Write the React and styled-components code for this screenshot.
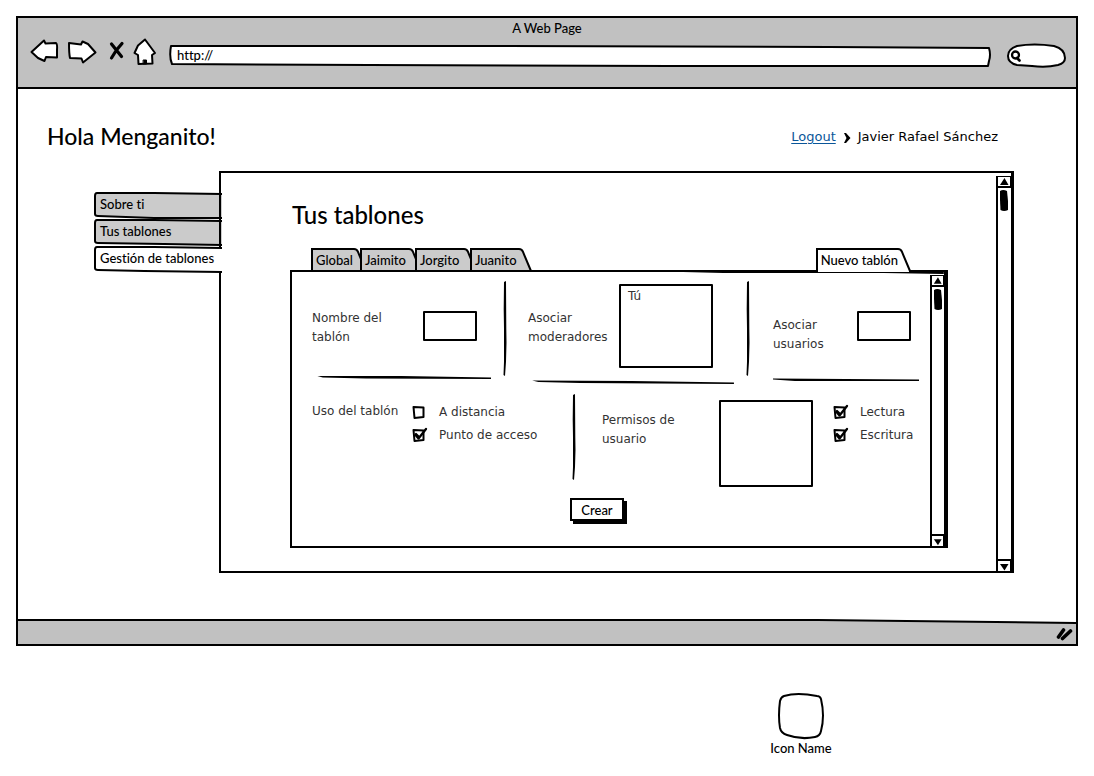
import React from "react";
import styled, { createGlobalStyle, css } from "styled-components";

const ink = "#000";
const chrome = "#c1c1c1";
const tabGrey = "#cbcbcb";
const uiFont = `Lato, "Open Sans", sans-serif`;
const textFont = `"DejaVu Sans", "Noto Sans", sans-serif`;

const GlobalStyle = createGlobalStyle`
  *, *::before, *::after { box-sizing: border-box; }
  body {
    margin: 0;
    background: #fff;
    color: ${ink};
    font: 500 13px/20px ${uiFont};
    font-variant-ligatures: none;
  }
  button, input, textarea { font: inherit; font-variant-ligatures: none; color: inherit; margin: 0; }
  h1, h2, p, figure { margin: 0; font-weight: 500; }
  svg { display: block; flex: none; }
`;

const Page = styled.div`
  padding: 16px 16px 8px;
`;

const BrowserWindow = styled.div`
  border: 2px solid ${ink};
`;

const Chrome = styled.header`
  background: ${chrome};
  border-bottom: 2px solid ${ink};
  padding-bottom: 17px;
`;

const WindowTitle = styled.p`
  text-align: center;
`;

const Toolbar = styled.div`
  display: flex;
  align-items: flex-start;
  height: 32px;
  padding: 0 10px 0 12px;
`;

const IconButton = styled.button`
  border: 0;
  padding: 0;
  background: none;
  margin-right: ${(p) => p.$gap || 0}px;
`;

const Backdrop = styled.svg`
  position: absolute;
  inset: 0;
  width: 100%;
  height: 100%;
  overflow: visible;
  pointer-events: none;
`;

const AddressBox = styled.label`
  position: relative;
  flex: 1;
  height: 22px;
  margin: 7px 15px 0 0;
`;

const SearchBox = styled(AddressBox)`
  flex: none;
  width: 60px;
  height: 24px;
  margin: 5px 0 0;
`;

const BareInput = styled.input`
  position: relative;
  display: block;
  width: 100%;
  height: 100%;
  border: 0;
  outline: 0;
  background: transparent;
  padding: 0 8px 2px;
  ${(p) => p.$search && css`padding-left: 18px;`}
`;

const TopRow = styled.div`
  display: flex;
  justify-content: space-between;
  align-items: center;
  height: 82px;
  padding: 12px 78px 0 29px;
`;

const Heading = styled.h1`
  font-size: ${(p) => p.$size}px;
  line-height: 30px;
`;

const Breadcrumb = styled.nav`
  display: flex;
  align-items: center;
  gap: 7px;
  padding-top: 2px;
  font: 13px/20px ${textFont};
`;

const Link = styled.a`
  color: #0a5699;
  text-decoration: underline;
  text-underline-offset: 2px;
`;

const Workspace = styled.div`
  display: flex;
  align-items: flex-start;
  padding: 0 62px 46px 76px;
`;

const SideTabs = styled.nav`
  position: relative;
  z-index: 1;
  display: flex;
  flex-direction: column;
  gap: 1px;
  width: 128px;
  margin: 21px -3px 0 0;
`;

const SideTab = styled.button`
  position: relative;
  height: 26px;
  padding: 0 0 2px 6px;
  border: 0;
  background: none;
  text-align: left;
  white-space: nowrap;
  & > span { position: relative; }
`;

const Panel = styled.main`
  display: flex;
  flex: 1;
  min-width: 0;
  border: 2px solid ${ink};
  border-right-width: 3px;
`;

const PanelBody = styled.div`
  flex: 1;
  min-width: 0;
  padding: 27px 48px 23px 69px;
`;

const PanelHeading = styled(Heading)`
  padding-left: 2px;
`;

const TabRow = styled.div`
  position: relative;
  z-index: 1;
  display: flex;
  margin: 18px 37px -2px 21px;
`;

const Tab = styled.button`
  display: flex;
  height: 24px;
  padding: 0;
  border: 0;
  background: none;
  margin-right: -7px;
  ${(p) => p.$end && css`margin: 0 0 0 auto;`}
`;

const TabLabel = styled.span`
  min-width: ${(p) => p.$width}px;
  height: ${(p) => (p.$open ? 24 : 22)}px;
  padding-left: 3px;
  border: solid ${ink};
  border-width: 2px 0 0 2px;
  background: ${(p) => (p.$open ? "#fff" : tabGrey)};
  text-align: left;
  white-space: nowrap;
`;

const FormPanel = styled.section`
  position: relative;
  display: flex;
  border: 2px solid ${ink};
  border-right-width: 4px;
`;

const TopStroke = styled.svg`
  position: absolute;
  top: -2px;
  right: 0;
  width: 40%;
  height: 4px;
`;

const Form = styled.form`
  flex: 1;
  min-width: 0;
  color: #333;
  font: 12px/19px ${textFont};
`;

const TopGrid = styled.div`
  display: grid;
  grid-template-columns: 205fr 16px 227fr 16px 174fr;
`;

const BottomGrid = styled.div`
  display: grid;
  grid-template-columns: 274fr 16px 348fr;
`;

const Cell = styled.div`
  display: flex;
  flex-direction: column;
  gap: 6px;
  padding: 12px ${(p) => p.$right}px 0 ${(p) => p.$left}px;
`;

const FieldRow = styled.div`
  display: flex;
  align-items: center;
  justify-content: space-between;
  height: 84px;
  padding-right: ${(p) => p.$inset}px;
`;

const FieldLabel = styled.label`
  padding-top: ${(p) => (p.$low ? 18 : 4)}px;
`;

const boxed = css`
  flex: none;
  border: 2px solid ${ink};
  border-radius: 1px;
  background: #fff;
  outline: 0;
`;

const TextBox = styled.input`
  ${boxed}
  width: 54px;
  height: 30px;
  padding: 0 4px;
`;

const TextArea = styled.textarea`
  ${boxed}
  width: 94px;
  height: ${(p) => p.$height}px;
  padding: 1px 7px;
  resize: none;
  overflow: hidden;
`;

const Group = styled.div`
  display: flex;
  align-items: flex-start;
  padding: 14px 0 0 20px;
`;

const GroupLabel = styled.label`
  width: ${(p) => p.$width}px;
  padding-top: ${(p) => p.$top}px;
`;

const Checks = styled.div`
  display: flex;
  flex-direction: column;
  gap: 4px;
  padding: 3px 0 0 ${(p) => p.$gap || 0}px;
`;

const CheckLabel = styled.label`
  display: flex;
  align-items: center;
  gap: 10px;
`;

const CheckBoxWrap = styled.span`
  position: relative;
  width: 17px;
  height: 17px;
  & input {
    appearance: none;
    position: absolute;
    inset: 0;
    width: 17px;
    height: 17px;
  }
  & svg { position: relative; pointer-events: none; }
  & .tick { display: none; }
  & input:checked + svg .tick { display: inline; }
`;

const Actions = styled.div`
  display: flex;
  padding: 11px 0 25px 278px;
`;

const SubmitButton = styled.button`
  width: 54px;
  height: 23px;
  padding: 0;
  border: 2px solid ${ink};
  background: #fff;
  color: ${ink};
  box-shadow: 3px 3px 0 ${ink};
  font: 500 13px/18px ${uiFont};
`;

const ScrollTrack = styled.div`
  display: flex;
  flex-direction: column;
  justify-content: space-between;
  width: ${(p) => p.$width}px;
  margin-top: 3px;
  border-left: 2px solid ${ink};
`;

const ScrollButton = styled.button`
  display: block;
  width: 100%;
  height: 12px;
  padding: 0;
  border: solid ${ink};
  border-width: 2px 1px 0 0;
  background: #fff;
  ${(p) => p.$up && css`border-width: 1px 1px 2px 0;`}
`;

const Status = styled.footer`
  position: relative;
  display: flex;
  justify-content: flex-end;
  height: 25px;
  padding: 6px 2px 0 0;
`;

const StatusGrip = styled.svg`
  position: relative;
`;

const IconFigure = styled.figure`
  display: flex;
  flex-direction: column;
  align-items: center;
  width: 62px;
  margin: 46px 246px 0 auto;
  line-height: 16px;
  white-space: nowrap;
`;

const stroke = {
  stroke: ink,
  strokeWidth: 2,
  strokeLinecap: "round",
  strokeLinejoin: "round",
  fill: "#fff",
};

function ToolIcon({ label, box, gap, children }) {
  const [x, w] = box;
  return (
    <IconButton type="button" aria-label={label} $gap={gap}>
      <svg width={w} height="32" viewBox={`${x} 38 ${w} 32`} {...stroke}>
        {children}
      </svg>
    </IconButton>
  );
}

const sideShapes = [
  "M128 2 L60 1 L3 1 Q1 1 1 4 L1 22 Q1 24 4 24 L60 26 L128 26",
  "M128 2 L60 1 L3 1 Q1 1 1 4 L1 22 Q1 24 4 24 L70 25 L128 26",
  "M128 2 L60 1 L3 1 Q1 1 1 4 L1 22 Q1 24 4 24 L50 25 L128 26",
];

function SideItem({ index, active, children }) {
  return (
    <SideTab type="button" aria-current={active ? "page" : undefined}>
      <Backdrop viewBox="0 0 128 26" preserveAspectRatio="none" aria-hidden="true">
        <path d={sideShapes[index]} {...stroke} strokeLinecap="butt" fill={active ? "#fff" : tabGrey} />
        {!active && <path d="M126 2 L126 26" stroke={ink} strokeWidth="2" />}
      </Backdrop>
      <span>{children}</span>
    </SideTab>
  );
}

function TopTab({ width, open, end, children }) {
  return (
    <Tab type="button" role="tab" aria-selected={!!open} $end={end}>
      <TabLabel $width={width} $open={open}>{children}</TabLabel>
      <svg width="13" height="24" viewBox="0 0 13 24" aria-hidden="true">
        <path d={`M0 1 Q3 1 4 4 L11 22 ${open ? "L11 24 L0 24" : "L0 22"} Z`} fill={open ? "#fff" : tabGrey} />
        <path d="M0 1 Q3 1 4 4 L12 23" fill="none" stroke={ink} strokeWidth="2" />
      </svg>
    </Tab>
  );
}

function Scrollbar({ width }) {
  return (
    <ScrollTrack $width={width}>
      <div>
        <ScrollButton type="button" aria-label="Subir" $up>
          <svg width="100%" height="9" viewBox="0 0 12 9"><path d="M6.500 1 L10.500 8 L2 8 Z" fill={ink} /></svg>
        </ScrollButton>
        <svg width="12" height="24" viewBox="0 0 12 24" aria-hidden="true">
          <path d="M2 3 Q5 1 9 3 L10 13 L10 22 Q6 24 2.500 22 L2 12 Z" fill={ink} />
        </svg>
      </div>
      <ScrollButton type="button" aria-label="Bajar">
        <svg width="100%" height="9" viewBox="0 0 12 9"><path d="M2 2 L10.500 2 L6.500 8.500 Z" fill={ink} /></svg>
      </ScrollButton>
    </ScrollTrack>
  );
}

function Rule({ d }) {
  return (
    <svg width="100%" height="12" viewBox="0 0 200 12" preserveAspectRatio="none" aria-hidden="true">
      <path d={d} fill={ink} />
    </svg>
  );
}

function Divider({ top, length }) {
  const l = length;
  return (
    <svg width="16" height={top + l} viewBox={`0 ${-top} 16 ${top + l}`} aria-hidden="true">
      <path
        d={`M7 1 L9 0 L9.300 ${l * 0.5} L9.500 ${l * 0.65} L9 ${l * 0.85} L8 ${l} L6.500 ${l - 1} L7 ${l * 0.85} L7 ${l * 0.5} L6.700 ${l * 0.3} Z`}
        fill={ink}
      />
    </svg>
  );
}

function Check({ checked, children }) {
  return (
    <CheckLabel>
      <CheckBoxWrap>
        <input type="checkbox" defaultChecked={checked} />
        <svg width="17" height="17" viewBox="0 0 17 17" {...stroke}>
          <path d="M1.500 3 L11.500 3.500 L11.500 13 L2.500 14 Z" />
          <path className="tick" d="M3.500 8 L6.500 11.500 L14 2 M4 7 L7 10" fill="none" strokeWidth="2.300" />
        </svg>
      </CheckBoxWrap>
      {children}
    </CheckLabel>
  );
}

export default function App() {
  return (
    <Page>
      <GlobalStyle />
      <BrowserWindow>
        <Chrome>
          <WindowTitle>A Web Page</WindowTitle>
          <Toolbar>
            <ToolIcon label="Atrás" box={[30, 30]} gap={7}>
              <path d="M31.500 52 L44 40.500 L45.500 43.500 L56 43 Q57.500 44 57 50 L57 57.500 L46 57 L44.500 61 L38 58 Z" />
            </ToolIcon>
            <ToolIcon label="Adelante" box={[67, 30]} gap={11}>
              <path d="M69 43 L81 44.500 L82.500 41.500 L88 44 L95.500 52.500 L83 62.500 L81.500 58.500 L70 58 Q69 54 69 43 Z" />
            </ToolIcon>
            <ToolIcon label="Detener" box={[108, 17]} gap={8}>
              <path d="M111.500 44 L121.500 56.500 M122 43.500 L116.500 50 L111.500 58" fill="none" strokeWidth="3.200" />
            </ToolIcon>
            <ToolIcon label="Inicio" box={[133, 24]} gap={12}>
              <path d="M145 39.500 L155 53 L152 55 L152.500 63.500 L138.500 64 L138 55 L134.500 53 L138 45.500 Z" />
              <path d="M143.500 60 L146.500 60 L146.500 64 L143.500 64 Z" fill={ink} strokeWidth="1" />
            </ToolIcon>
            <AddressBox>
              <Backdrop viewBox="0 0 822 22" preserveAspectRatio="none" aria-hidden="true">
                <path d="M2 1 L300 1 L660 2 L820 3 Q822 10 820 16 L819 21 L500 21 L200 20 L3 19 Q0 12 2 1 Z" {...stroke} />
              </Backdrop>
              <BareInput aria-label="Dirección" defaultValue="http://" />
            </AddressBox>
            <SearchBox>
              <Backdrop viewBox="0 0 60 24" aria-hidden="true">
                <path d="M2 13 Q2 6 11 3 Q28 0 48 3 Q59 6 59 15 Q59 20 52 22 Q40 25 26 23 L11 22 Q2 20 2 13 Z" {...stroke} />
                <circle cx="9.500" cy="12" r="3.500" {...stroke} strokeWidth="2.300" />
                <path d="M11 15 L13.500 17.500" {...stroke} strokeWidth="2.600" />
              </Backdrop>
              <BareInput $search aria-label="Buscar" />
            </SearchBox>
          </Toolbar>
        </Chrome>

        <TopRow>
          <Heading $size={23}>Hola Menganito!</Heading>
          <Breadcrumb aria-label="Sesión">
            <Link href="#logout">Logout</Link>
            <svg width="8" height="12" viewBox="0 0 8 12" aria-hidden="true">
              <path d="M1 2 L3 2 L7.500 7 L3 12 L1 12 L3.500 7 Z" fill={ink} />
            </svg>
            <span>Javier Rafael Sánchez</span>
          </Breadcrumb>
        </TopRow>

        <Workspace>
          <SideTabs>
            <SideItem index={0}>Sobre ti</SideItem>
            <SideItem index={1}>Tus tablones</SideItem>
            <SideItem index={2} active>Gestión de tablones</SideItem>
          </SideTabs>

          <Panel>
            <PanelBody>
              <PanelHeading as="h2" $size={24}>Tus tablones</PanelHeading>
              <TabRow role="tablist">
                <TopTab width={43}>Global</TopTab>
                <TopTab width={49}>Jaimito</TopTab>
                <TopTab width={49}>Jorgito</TopTab>
                <TopTab width={49}>Juanito</TopTab>
                <TopTab width={81} open end>Nuevo tablón</TopTab>
              </TabRow>
              <FormPanel>
                <TopStroke viewBox="0 0 260 4" preserveAspectRatio="none" aria-hidden="true">
                  <path d="M0 0 L260 0 L260 4 L200 3 L40 3 L0 2 Z" fill={ink} />
                </TopStroke>
                <Form onSubmit={(e) => e.preventDefault()}>
                  <TopGrid>
                    <Cell $left={20} $right={6}>
                      <FieldRow $inset={14}>
                        <FieldLabel htmlFor="nombre">Nombre del<br />tablón</FieldLabel>
                        <TextBox id="nombre" />
                      </FieldRow>
                      <Rule d="M6 2 L100 2 L200 3.500 L200 5 L60 4.500 L12 3.500 Z" />
                    </Cell>
                    <Divider top={9} length={95} />
                    <Cell $left={15} $right={4}>
                      <FieldRow $inset={23}>
                        <FieldLabel htmlFor="moderadores">Asociar<br />moderadores</FieldLabel>
                        <TextArea id="moderadores" $height={84} defaultValue="Tú" />
                      </FieldRow>
                      <Rule d="M4 6.500 L100 7 L198 8.500 L198 10 L50 9 L10 8 Z" />
                    </Cell>
                    <Divider top={9} length={95} />
                    <Cell $left={17} $right={11}>
                      <FieldRow $inset={8}>
                        <FieldLabel htmlFor="usuarios" $low>Asociar<br />usuarios</FieldLabel>
                        <TextBox id="usuarios" />
                      </FieldRow>
                      <Rule d="M0 4.500 L100 5 L200 5.500 L200 7 L30 7 L0 5.500 Z" />
                    </Cell>
                  </TopGrid>
                  <BottomGrid>
                    <Group role="group" aria-label="Uso del tablón">
                      <GroupLabel as="span" $width={100} $top={2}>Uso del tablón</GroupLabel>
                      <Checks>
                        <Check>A distancia</Check>
                        <Check checked>Punto de acceso</Check>
                      </Checks>
                    </Group>
                    <Divider top={8} length={86} />
                    <Group>
                      <GroupLabel htmlFor="permisos" $width={117} $top={11}>Permisos de<br />usuario</GroupLabel>
                      <TextArea id="permisos" $height={87} />
                      <Checks $gap={20}>
                        <Check checked>Lectura</Check>
                        <Check checked>Escritura</Check>
                      </Checks>
                    </Group>
                  </BottomGrid>
                  <Actions>
                    <SubmitButton type="submit">Crear</SubmitButton>
                  </Actions>
                </Form>
                <Scrollbar width={14} />
              </FormPanel>
            </PanelBody>
            <Scrollbar width={15} />
          </Panel>
        </Workspace>

        <Status>
          <Backdrop viewBox="0 0 1058 25" preserveAspectRatio="none" aria-hidden="true">
            <path d="M0 1 L600 1 L800 1 L1058 4 L1058 25 L0 25 Z" fill={chrome} />
            <path d="M0 1 L600 1 L800 1 L1058 4" fill="none" stroke={ink} strokeWidth="2" />
          </Backdrop>
          <StatusGrip width="18" height="16" viewBox="0 0 18 16" aria-hidden="true">
            <path d="M2.500 12 L7.500 5 M6.500 13.500 L14.500 6" stroke={ink} strokeWidth="3.600" strokeLinecap="round" />
          </StatusGrip>
        </Status>
      </BrowserWindow>

      <IconFigure>
        <svg width="48" height="48" viewBox="0 0 48 48" aria-hidden="true">
          <path d="M7 4 Q20 0 40 4 Q43 4 44 7 Q48 24 44 39 Q43 44 38 45 Q24 48 10 43 Q4 41 3 36 Q1 24 3 9 Q4 5 7 4 Z" {...stroke} />
        </svg>
        <figcaption>Icon Name</figcaption>
      </IconFigure>
    </Page>
  );
}
